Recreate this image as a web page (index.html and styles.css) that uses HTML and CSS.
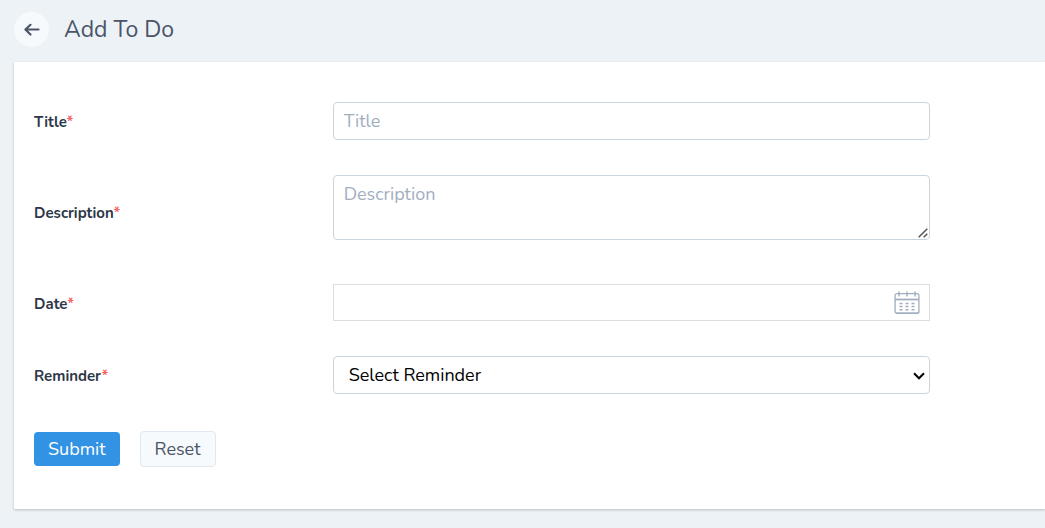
FILE: index.html
```html
<!DOCTYPE html>
<html lang="en">
<head>
<meta charset="utf-8">
<meta name="viewport" content="width=device-width, initial-scale=1">
<title>Add To Do</title>
<link rel="stylesheet" href="styles.css">
</head>
<body>
<header class="page-header">
  <button class="back" type="button" aria-label="Back">
    <svg class="back-icon" viewBox="0 0 18 16" fill="none" stroke="currentColor" stroke-width="2.2" stroke-linecap="round" stroke-linejoin="round" aria-hidden="true"><path d="M15.5 7.5H2.8M7.5 2.8L2.4 7.5l5.1 5"/></svg>
  </button>
  <h1 class="page-title">Add To Do</h1>
</header>
<main class="card">
  <form class="form">
    <div class="row">
      <label class="label" for="title">Title<span class="required">*</span></label>
      <input class="field" id="title" type="text" placeholder="Title">
    </div>
    <div class="row">
      <label class="label" for="description">Description<span class="required">*</span></label>
      <div class="area-wrap">
        <div class="control">
          <textarea class="field area" id="description" placeholder="Description"></textarea>
          <svg class="grip" viewBox="0 0 10 10" fill="none" stroke="#555" stroke-width="1.5" aria-hidden="true"><path d="M.7 9.3l8.6-8.6M5.7 9.3l3.6-3.6"/></svg>
        </div>
      </div>
    </div>
    <div class="row">
      <label class="label" for="date">Date<span class="required">*</span></label>
      <div class="date-box">
        <input class="date-input" id="date" type="text">
        <button class="date-button" type="button" aria-label="Open calendar">
          <svg class="date-icon" viewBox="0 0 26 24" fill="none" stroke="currentColor" aria-hidden="true">
            <rect x="1.1" y="2.6" width="23.8" height="19.8" rx="2" stroke-width="1.3"/>
            <path d="M1 8.5h24" stroke-width="1.8"/>
            <path d="M2 22.2h22" stroke-width="1.6"/>
            <path d="M5 .5v5M13 .5v5M21 .5v5" stroke-width="1.4"/>
            <path d="M5.5 12.5h3M11.5 12.5h3M17.5 12.5h3M5.5 15.5h3M11.5 15.5h3M17.5 15.5h3M5.5 18.7h3M11.5 18.7h3M17.5 18.7h3" stroke-width="1.4"/>
          </svg>
        </button>
      </div>
    </div>
    <div class="row">
      <label class="label" for="reminder">Reminder<span class="required">*</span></label>
      <div class="control">
        <select class="field select" id="reminder"><option>Select Reminder</option></select>
        <svg class="chevron" viewBox="0 0 12 8" fill="none" stroke="#000" stroke-width="2" aria-hidden="true"><path d="M1 1.3l5 5 5-5"/></svg>
      </div>
    </div>
    <div class="actions">
      <button class="button primary" type="submit">Submit</button>
      <button class="button secondary" type="reset">Reset</button>
    </div>
  </form>
</main>
</body>
</html>
```
FILE: styles.css
```css
* {
  box-sizing: border-box;
}

body {
  margin: 0;
  padding: 12px 0 19px 14px;
  background: #edf2f7;
  color: #2d3748;
  font-family: Nunito, Lato, "Open Sans", sans-serif;
  font-size: 18px;
  line-height: 24px;
}

button,
input,
select,
textarea {
  margin: 0;
  font: inherit;
}

.page-header {
  display: flex;
  align-items: center;
  gap: 15px;
  margin-bottom: 15px;
}

.back {
  display: flex;
  align-items: center;
  justify-content: center;
  width: 35px;
  height: 35px;
  padding: 0;
  border: 0;
  border-radius: 50%;
  background: #f7fafc;
  color: #4a5568;
}

.back-icon {
  width: 18px;
  height: 16px;
}

.page-title {
  margin: 0;
  color: #4a5568;
  font-size: 23px;
  font-weight: 400;
  line-height: 32px;
}

.card {
  padding: 40px 20px 42px;
  background: #fff;
  box-shadow: 0 1px 3px rgba(0, 0, 0, 0.12), 0 1px 2px rgba(0, 0, 0, 0.1);
}

.form {
  display: flex;
  flex-direction: column;
  gap: 35px;
  max-width: 896px;
}

.row {
  display: grid;
  grid-template-columns: 1fr 2fr;
  align-items: center;
}

.label {
  padding-top: 2px;
  font-size: 15px;
  font-weight: 700;
}

.required {
  color: #f56565;
}

.control {
  position: relative;
}

.field {
  display: block;
  width: 100%;
  height: 38px;
  padding: 6px 10px;
  border: 1px solid #cbd5e0;
  border-radius: 4px;
  background: #fff;
}

.field::placeholder {
  color: #a0aec0;
  opacity: 1;
}

.area-wrap {
  padding-bottom: 9px;
}

.area {
  height: 65px;
  resize: both;
}

.area::-webkit-resizer {
  background: transparent;
}

.grip {
  position: absolute;
  right: 2px;
  bottom: 2px;
  width: 10px;
  height: 10px;
  pointer-events: none;
}

.date-box {
  display: flex;
  height: 37px;
  border: 1px solid #ddd;
}

.date-input {
  flex: 1;
  min-width: 0;
  padding: 0 10px;
  border: 0;
  background: transparent;
}

.date-button {
  display: flex;
  align-items: center;
  padding: 0 9px;
  border: 0;
  background: transparent;
  color: #a0aec0;
}

.date-icon {
  width: 26px;
  height: 24px;
}

.select {
  padding: 0 30px 0 15px;
  appearance: none;
  color: #000;
}

.chevron {
  position: absolute;
  top: 16px;
  right: 5px;
  width: 12px;
  height: 8px;
  pointer-events: none;
}

.actions {
  display: flex;
  align-items: center;
  gap: 20px;
  padding-top: 2px;
}

.button {
  height: 34px;
  padding: 0 14px;
  border: 0;
  border-radius: 4px;
}

.primary {
  background: #3292e3;
  color: #fff;
}

.secondary {
  height: 36px;
  border: 1px solid #e2e8f0;
  background: #f7fafc;
  color: #4a5568;
}
```
